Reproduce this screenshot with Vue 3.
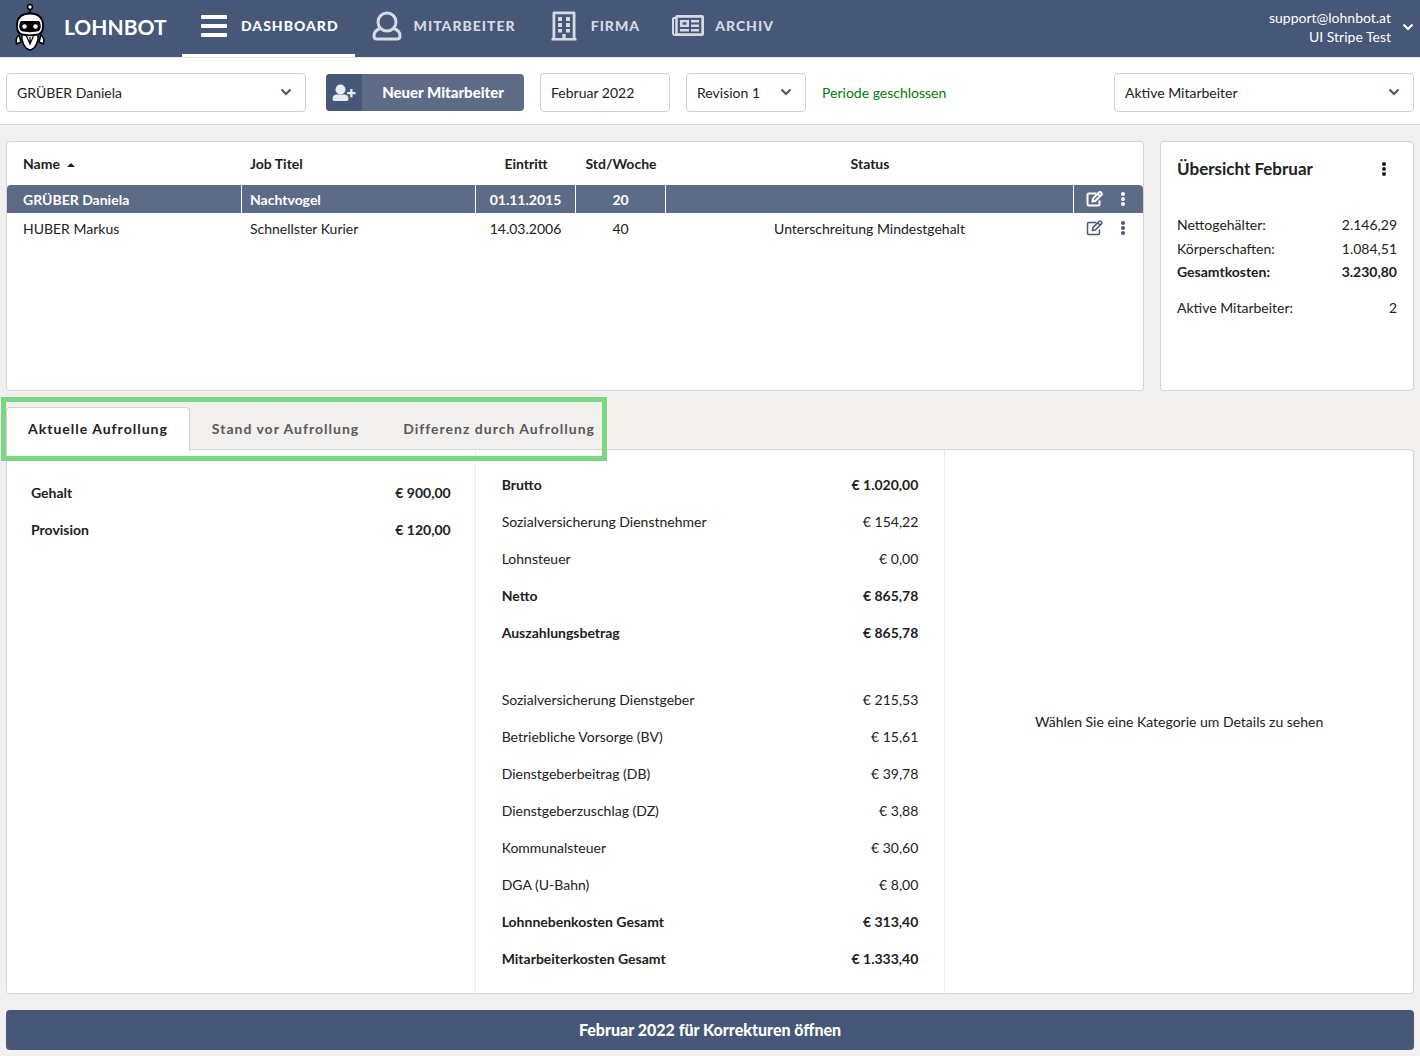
<script setup>
import { ref } from 'vue'

const employee = ref('GRÜBER Daniela')
const period = ref('Februar 2022')
const revision = ref('Revision 1')
const filter = ref('Aktive Mitarbeiter')
const activeTab = ref(0)
const selected = ref(0)

const nav = [
  { label: 'Dashboard', icon: 'bars' },
  { label: 'Mitarbeiter', icon: 'user' },
  { label: 'Firma', icon: 'building' },
  { label: 'Archiv', icon: 'news' },
]

const employees = [
  { name: 'GRÜBER Daniela', job: 'Nachtvogel', entry: '01.11.2015', hours: '20', status: '' },
  { name: 'HUBER Markus', job: 'Schnellster Kurier', entry: '14.03.2006', hours: '40', status: 'Unterschreitung Mindestgehalt' },
]

const tabs = ['Aktuelle Aufrollung', 'Stand vor Aufrollung', 'Differenz durch Aufrollung']

const wages = [
  { label: 'Gehalt', value: '€ 900,00', strong: true },
  { label: 'Provision', value: '€ 120,00', strong: true },
]

const costs = [
  { label: 'Brutto', value: '€ 1.020,00', strong: true },
  { label: 'Sozialversicherung Dienstnehmer', value: '€ 154,22' },
  { label: 'Lohnsteuer', value: '€ 0,00' },
  { label: 'Netto', value: '€ 865,78', strong: true },
  { label: 'Auszahlungsbetrag', value: '€ 865,78', strong: true },
  { label: 'Sozialversicherung Dienstgeber', value: '€ 215,53', spaced: true },
  { label: 'Betriebliche Vorsorge (BV)', value: '€ 15,61' },
  { label: 'Dienstgeberbeitrag (DB)', value: '€ 39,78' },
  { label: 'Dienstgeberzuschlag (DZ)', value: '€ 3,88' },
  { label: 'Kommunalsteuer', value: '€ 30,60' },
  { label: 'DGA (U-Bahn)', value: '€ 8,00' },
  { label: 'Lohnnebenkosten Gesamt', value: '€ 313,40', strong: true },
  { label: 'Mitarbeiterkosten Gesamt', value: '€ 1.333,40', strong: true },
]
</script>

<template>
  <div class="page">
    <header class="topbar">
      <a href="#" class="brand">
        <svg class="robot" viewBox="0 0 32 48" aria-hidden="true">
          <path d="M16 5v6" stroke="#000" stroke-width="2" />
          <circle cx="16" cy="4" r="2.4" fill="#fff" stroke="#000" stroke-width="1.5" />
          <path d="M5 32c-2.500 2-3.500 5-2.500 9l4.500-2zM27 32c2.500 2 3.500 5 2.500 9l-4.500-2z" fill="#fff" stroke="#000" stroke-width="1.500" stroke-linejoin="round" />
          <path d="M8 31h16c1 6-2 15-8 16-6-1-9-10-8-16z" fill="#fff" stroke="#000" stroke-width="1.500" />
          <path d="M12.500 33l3.500 8 3.500-8M16 34v6" fill="none" stroke="#000" stroke-width="1.200" />
          <path d="M16 10.500c8 0 12 3 13 10 .6 7-1 10-5 11-5 1-11 1-16 0-4-1-5.600-4-5-11 1-7 5-10 13-10z" fill="#fff" stroke="#000" stroke-width="1.800" />
          <path d="M7 18h18c2.500 3 2 8 0 10-5 1.500-13 1.500-18 0-2-2-2.500-7 0-10z" fill="#000" />
          <circle cx="10.500" cy="23.500" r="2.300" fill="#fff" />
          <circle cx="21.500" cy="23.500" r="2.300" fill="#fff" />
        </svg>
        <span>LOHNBOT</span>
      </a>
      <nav class="nav">
        <a v-for="(item, i) in nav" :key="item.label" href="#" class="nav-item" :class="{ active: i === 0 }">
          <svg v-if="item.icon === 'bars'" viewBox="0 0 36 30" aria-hidden="true">
            <rect x="5" y="4" width="26" height="4" rx="1" />
            <rect x="5" y="13" width="26" height="4" rx="1" />
            <rect x="5" y="22" width="26" height="4" rx="1" />
          </svg>
          <svg v-else-if="item.icon === 'user'" viewBox="0 0 36 30" aria-hidden="true" class="outline">
            <circle cx="18" cy="11" r="9" />
            <path d="M11.500 17.500C7.500 18.500 5 21 5 25c0 2 1 3 3 3h20c2 0 3-1 3-3 0-4-2.500-6.500-6.500-7.500" />
          </svg>
          <svg v-else-if="item.icon === 'building'" viewBox="0 0 36 30" aria-hidden="true">
            <path fill-rule="evenodd" d="M8 .5h20q1.500 0 1.500 1.500v25h1v2.500h-25V27h1V2Q6.500.5 8 .5zM9.300 3.200V27h7v-4h3.400v4h7V3.200z" />
            <path d="M12 6h4v4h-4zM20 6h4v4h-4zM12 12h4v4h-4zM20 12h4v4h-4zM12 18h4v3.500h-4zM20 18h4v3.500h-4z" />
          </svg>
          <svg v-else viewBox="0 0 36 30" aria-hidden="true">
            <path fill-rule="evenodd" d="M7 4h25q2 0 2 2v17q0 2-2 2H5q-3 0-3-3V8q0-2 2-2h1q0-2 2-2zM7.700 6.700v15.600h23.600V6.700zM4 8v14q0 1 .6 1 .6 0 .6-1V8z" />
            <path fill-rule="evenodd" d="M10 9h9v7h-9zM12.500 11.300v2.500h4v-2.500zM21 9h8v2.400h-8zM21 13.500h8v2.400h-8zM10 18h9v2.400h-9zM21 18h8v2.400h-8z" />
          </svg>
          <span>{{ item.label }}</span>
        </a>
      </nav>
      <button type="button" class="account">
        <span>support@lohnbot.at<br>UI Stripe Test</span>
        <svg class="chevron" viewBox="0 0 12 8" aria-hidden="true"><path d="M1.500 1.500 6 6l4.500-4.500" /></svg>
      </button>
    </header>

    <section class="toolbar">
      <div class="select wide">
        <select v-model="employee" aria-label="Mitarbeiter auswählen"><option>GRÜBER Daniela</option><option>HUBER Markus</option></select>
        <svg class="chevron" viewBox="0 0 12 8" aria-hidden="true"><path d="M1.500 1.500 6 6l4.500-4.500" /></svg>
      </div>
      <button type="button" class="new-employee">
        <span class="new-icon">
          <svg viewBox="0 0 24 18" aria-hidden="true">
            <circle cx="8.500" cy="5.500" r="5" />
            <path d="M5 10.500h7c3 0 4.500 2 4.500 4.500 0 1.300-.7 2-2 2h-12c-1.300 0-2-.7-2-2 0-2.500 1.500-4.500 4.500-4.500zM18.200 5h2.300v3H23.500v2.300h-3v3h-2.300v-3h-3V8h3z" />
          </svg>
        </span>
        <span class="new-label">Neuer Mitarbeiter</span>
      </button>
      <input v-model="period" class="period" type="text" aria-label="Periode">
      <div class="select revision">
        <select v-model="revision" aria-label="Revision"><option>Revision 1</option></select>
        <svg class="chevron" viewBox="0 0 12 8" aria-hidden="true"><path d="M1.500 1.500 6 6l4.500-4.500" /></svg>
      </div>
      <span class="closed">Periode geschlossen</span>
      <div class="select wide filter">
        <select v-model="filter" aria-label="Filter"><option>Aktive Mitarbeiter</option></select>
        <svg class="chevron" viewBox="0 0 12 8" aria-hidden="true"><path d="M1.500 1.500 6 6l4.500-4.500" /></svg>
      </div>
    </section>

    <main class="content">
      <div class="top">
        <section class="card">
          <table class="employees">
            <colgroup>
              <col class="c-name"><col class="c-job"><col class="c-entry"><col class="c-hours"><col><col class="c-actions">
            </colgroup>
            <thead>
              <tr>
                <th>Name <svg class="sort" viewBox="0 0 8 4" aria-hidden="true"><path d="M0 4l4-4 4 4z" /></svg></th>
                <th>Job Titel</th>
                <th class="center">Eintritt</th>
                <th class="center">Std/Woche</th>
                <th class="center">Status</th>
                <th></th>
              </tr>
            </thead>
            <tbody>
              <tr v-for="(e, i) in employees" :key="e.name" :class="{ selected: i === selected }" @click="selected = i">
                <td>{{ e.name }}</td>
                <td>{{ e.job }}</td>
                <td class="center">{{ e.entry }}</td>
                <td class="center">{{ e.hours }}</td>
                <td class="center">{{ e.status }}</td>
                <td>
                  <div class="actions">
                    <button type="button" aria-label="Bearbeiten">
                      <svg class="edit" viewBox="0 0 18 16" aria-hidden="true">
                        <path d="M10.500 2.500H2.700q-1.200 0-1.200 1.200v9.600q0 1.200 1.200 1.200h9.600q1.200 0 1.200-1.200V9.500" />
                        <path d="M6.500 10.300l.4-2.700 6.300-6.300q.7-.7 1.400 0l1 1q.7.7 0 1.400L9.300 10zM11.800 2.800l2.300 2.300" />
                      </svg>
                    </button>
                    <button type="button" aria-label="Mehr">
                      <svg class="dots" viewBox="0 0 6 14" aria-hidden="true"><circle cx="3" cy="2" r="2" /><circle cx="3" cy="7" r="2" /><circle cx="3" cy="12" r="2" /></svg>
                    </button>
                  </div>
                </td>
              </tr>
            </tbody>
          </table>
        </section>

        <aside class="card overview">
          <div class="overview-head">
            <h2>Übersicht Februar</h2>
            <button type="button" aria-label="Mehr">
              <svg class="dots" viewBox="0 0 6 14" aria-hidden="true"><circle cx="3" cy="2" r="2" /><circle cx="3" cy="7" r="2" /><circle cx="3" cy="12" r="2" /></svg>
            </button>
          </div>
          <dl>
            <div><dt>Nettogehälter:</dt><dd>2.146,29</dd></div>
            <div><dt>Körperschaften:</dt><dd>1.084,51</dd></div>
            <div class="strong"><dt>Gesamtkosten:</dt><dd>3.230,80</dd></div>
            <div class="count"><dt>Aktive Mitarbeiter:</dt><dd>2</dd></div>
          </dl>
        </aside>
      </div>

      <div class="tabs" role="tablist">
        <button
          v-for="(t, i) in tabs" :key="t" type="button" role="tab"
          :aria-selected="i === activeTab" :class="{ active: i === activeTab }" @click="activeTab = i"
        >{{ t }}</button>
        <div class="highlight"></div>
      </div>

      <section class="panel">
        <dl class="wages">
          <div v-for="r in wages" :key="r.label" class="row" :class="{ strong: r.strong }"><dt>{{ r.label }}</dt><dd>{{ r.value }}</dd></div>
        </dl>
        <dl class="costs">
          <div v-for="r in costs" :key="r.label" class="row" :class="{ strong: r.strong, spaced: r.spaced }"><dt>{{ r.label }}</dt><dd>{{ r.value }}</dd></div>
        </dl>
        <div class="hint">Wählen Sie eine Kategorie um Details zu sehen</div>
      </section>

      <button type="button" class="open-period">Februar 2022 für Korrekturen öffnen</button>
    </main>
  </div>
</template>

<style>
body {
  margin: 0;
  background: #f1f0ee;
}
</style>

<style scoped>
.page {
  font-family: Lato, sans-serif;
  font-size: 14px;
  line-height: 20px;
  color: #212121;
}
.page * {
  box-sizing: border-box;
}
button,
input,
select {
  font: inherit;
  color: inherit;
}
button {
  border: 0;
  padding: 0;
  background: none;
  cursor: pointer;
}
a {
  text-decoration: none;
  color: #fff;
}
dl,
dd,
h2 {
  margin: 0;
}
svg {
  display: block;
  fill: currentColor;
}
.topbar {
  display: flex;
  height: 57px;
  background: #465777;
  color: #fff;
}
.brand {
  display: flex;
  align-items: center;
  gap: 18px;
  width: 182px;
  padding: 0 0 3px 14px;
  font-size: 21px;
  font-weight: 700;
}
.robot {
  width: 32px;
  height: 48px;
}
.nav {
  display: flex;
}
.nav-item {
  display: flex;
  align-items: center;
  gap: 9px;
  padding: 0 16px 2px 14px;
  border-bottom: 3px solid transparent;
  font-weight: 900;
  letter-spacing: 1px;
  text-transform: uppercase;
  color: #d5dae4;
}
.nav-item.active {
  color: #fff;
  border-bottom-color: #fff;
}
.nav-item svg {
  width: 36px;
  height: 30px;
}
.outline {
  fill: none;
  stroke: currentColor;
  stroke-width: 3;
}
.account {
  display: flex;
  align-items: center;
  gap: 11px;
  margin-left: auto;
  padding: 0 6px 3px 0;
  line-height: 19px;
  text-align: right;
}
.chevron {
  width: 12px;
  height: 8px;
  fill: none;
  stroke: currentColor;
  stroke-width: 2;
}
.toolbar {
  display: flex;
  align-items: center;
  gap: 16px;
  padding: 15px 6px 12px;
  border-top: 1px solid #e4e6ee;
  border-bottom: 1px solid #d4d4d5;
  background: #fff;
}
.select {
  position: relative;
}
.select select,
.period {
  width: 100%;
  height: 39px;
  padding: 0 10px;
  border: 1px solid #cfcfd0;
  border-radius: 4px;
  background: #fff;
  appearance: none;
}
.select .chevron {
  position: absolute;
  right: 14px;
  top: 15px;
  color: #465777;
  pointer-events: none;
}
.wide {
  width: 300px;
}
.revision {
  width: 120px;
}
.toolbar .period {
  width: 130px;
}
.new-employee {
  display: flex;
  width: 198px;
  height: 37px;
  margin-left: 4px;
  border-radius: 4px;
  overflow: hidden;
  background: #5e6b87;
  color: #fff;
  font-size: 15px;
  font-weight: 900;
}
.new-icon {
  display: flex;
  align-items: center;
  justify-content: center;
  width: 36px;
  height: 37px;
  background: #465777;
  color: #e8ebf1;
}
.new-icon svg {
  width: 24px;
  height: 18px;
}
.new-label {
  flex: 1;
  line-height: 37px;
}
.closed {
  color: #008000;
}
.filter {
  margin-left: auto;
}
.content {
  padding: 16px 6px 6px;
}
.top {
  display: grid;
  grid-template-columns: 1fr 254px;
  gap: 16px;
}
.card {
  min-height: 250px;
  border: 1px solid #d4d4d5;
  border-radius: 4px;
  background: #fff;
}
.employees {
  width: 100%;
  table-layout: fixed;
  border-collapse: separate;
  border-spacing: 0;
}
.c-name {
  width: 235px;
}
.c-job {
  width: 234px;
}
.c-entry {
  width: 100px;
}
.c-hours {
  width: 90px;
}
.c-actions {
  width: 69px;
}
th,
td {
  padding: 0 8px;
  text-align: left;
  font-weight: 400;
}
th:first-child,
td:first-child {
  padding-left: 16px;
}
th {
  height: 43px;
  font-weight: 700;
}
td {
  height: 29px;
  padding-top: 2px;
  border-right: 1px solid #fff;
  border-bottom: 1px solid #fff;
}
td:last-child {
  padding: 0 12px;
  border-right: 0;
}
.center {
  text-align: center;
}
.sort {
  display: inline-block;
  width: 8px;
  height: 4px;
  margin-left: 4px;
  vertical-align: middle;
}
.selected td {
  background: #5e6b87;
  background-clip: padding-box;
  color: #fff;
  font-weight: 700;
}
.selected td:first-child {
  border-top-left-radius: 4px;
}
.selected td:last-child {
  border-top-right-radius: 4px;
}
.actions {
  display: flex;
  align-items: center;
  gap: 16px;
  color: #465777;
}
.selected .actions {
  color: #fff;
}
.edit {
  width: 18px;
  height: 16px;
  fill: none;
  stroke: currentColor;
  stroke-width: 1.5;
}
.selected .edit {
  stroke-width: 2;
}
.dots {
  width: 6px;
  height: 14px;
}
.overview {
  padding: 16px;
}
.overview-head {
  display: flex;
  align-items: center;
  justify-content: space-between;
  height: 22px;
  margin-bottom: 33px;
  padding-right: 10px;
}
h2 {
  font-size: 17px;
  font-weight: 700;
}
dl > div {
  display: flex;
  justify-content: space-between;
}
.overview dl > div {
  line-height: 24px;
}
.overview dl > .strong {
  line-height: 22px;
}
.overview dl > .count {
  margin-top: 13px;
}
.strong {
  font-weight: 700;
}
.tabs {
  position: relative;
  display: flex;
  width: max-content;
  margin-top: 16px;
}
.tabs button {
  height: 43px;
  padding: 0 21px;
  border: 1px solid transparent;
  border-bottom: 0;
  font-weight: 700;
  letter-spacing: 1px;
  color: #595959;
}
.tabs .active {
  height: 44px;
  margin-bottom: -1px;
  padding-bottom: 2px;
  border-color: #d4d4d5;
  border-radius: 4px 4px 0 0;
  background: #fff;
  color: #212121;
  z-index: 1;
}
.highlight {
  position: absolute;
  inset: -10px 10px -11px -5px;
  border: 5px solid #7bd881;
  z-index: 2;
  pointer-events: none;
}
.panel {
  display: grid;
  grid-template-columns: repeat(3, 1fr);
  margin-top: -1px;
  border: 1px solid #d4d4d5;
  border-radius: 0 4px 4px 4px;
  background: #fff;
}
.wages {
  padding: 24px;
  border-right: 1px solid #ececed;
}
.costs {
  padding: 16px 26px;
}
.row {
  line-height: 37px;
}
.spaced {
  margin-top: 30px;
}
.hint {
  display: flex;
  align-items: center;
  justify-content: center;
  border-left: 1px solid #ececed;
}
.open-period {
  width: 100%;
  height: 40px;
  margin-top: 16px;
  border-radius: 4px;
  background: #465777;
  color: #fff;
  font-size: 16px;
  font-weight: 900;
}
</style>
